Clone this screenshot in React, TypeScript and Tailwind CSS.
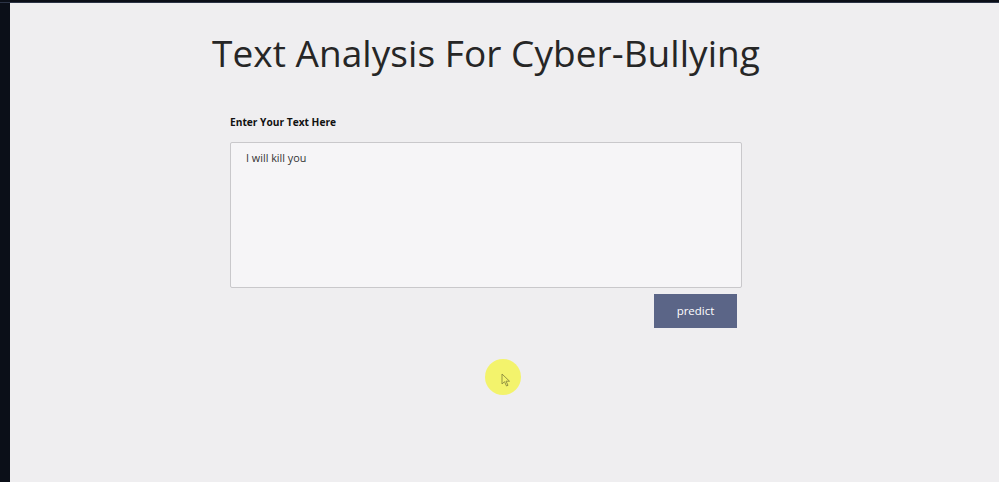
const App = () => {
  return (
    <div className="w-[999px] h-[482px] bg-[#0b0f18] flex flex-col overflow-hidden">
      <div className="h-[3px] bg-[#0b0f18] border-b border-[#2c3446]" />
      <div className="flex flex-1">
        <div className="w-[10px] bg-[#0b0f18]" />
        <div
          className="relative flex-1 bg-[#efeef0] flex flex-col"
          style={{ fontFamily: '"Open Sans", "Noto Sans", sans-serif' }}
        >
          <h1 className="ml-[202px] mt-[26px] text-[37px] leading-[48px] font-normal text-[#262626] tracking-[0.05px]">
            Text Analysis For Cyber-Bullying
          </h1>
          <div className="ml-[220px] mt-[38px] w-[512px] flex flex-col">
            <label className="text-[10.2px] font-bold text-[#111] leading-[14px]">
              Enter Your Text Here
            </label>
            <div className="mt-[13px] h-[146px] border border-[#c9c8cb] rounded-[2px] bg-[#f6f5f7] px-[15px] py-[7px] text-[10.8px] text-[#333]">
              I will kill you
            </div>
            <div className="flex justify-end pr-[5px] mt-[6px]">
              <button className="w-[83px] h-[34px] bg-[#5b6587] text-white text-[11.5px]">
                predict
              </button>
            </div>
          </div>
          <div className="absolute left-[475px] top-[356px] w-[36px] h-[36px] rounded-full bg-[#f3f36c] flex items-center justify-center">
            <svg width="10" height="14" viewBox="0 0 10 14" className="ml-[6px] mt-[6px]">
              <path
                d="M1 1 L1 11 L3.5 8.7 L5.5 13 L7 12.3 L5 8.2 L8.5 8.2 Z"
                fill="#f3f36c"
                stroke="#8a8a40"
                strokeWidth="0.9"
              />
            </svg>
          </div>
        </div>
      </div>
    </div>
  );
};

export default App;
